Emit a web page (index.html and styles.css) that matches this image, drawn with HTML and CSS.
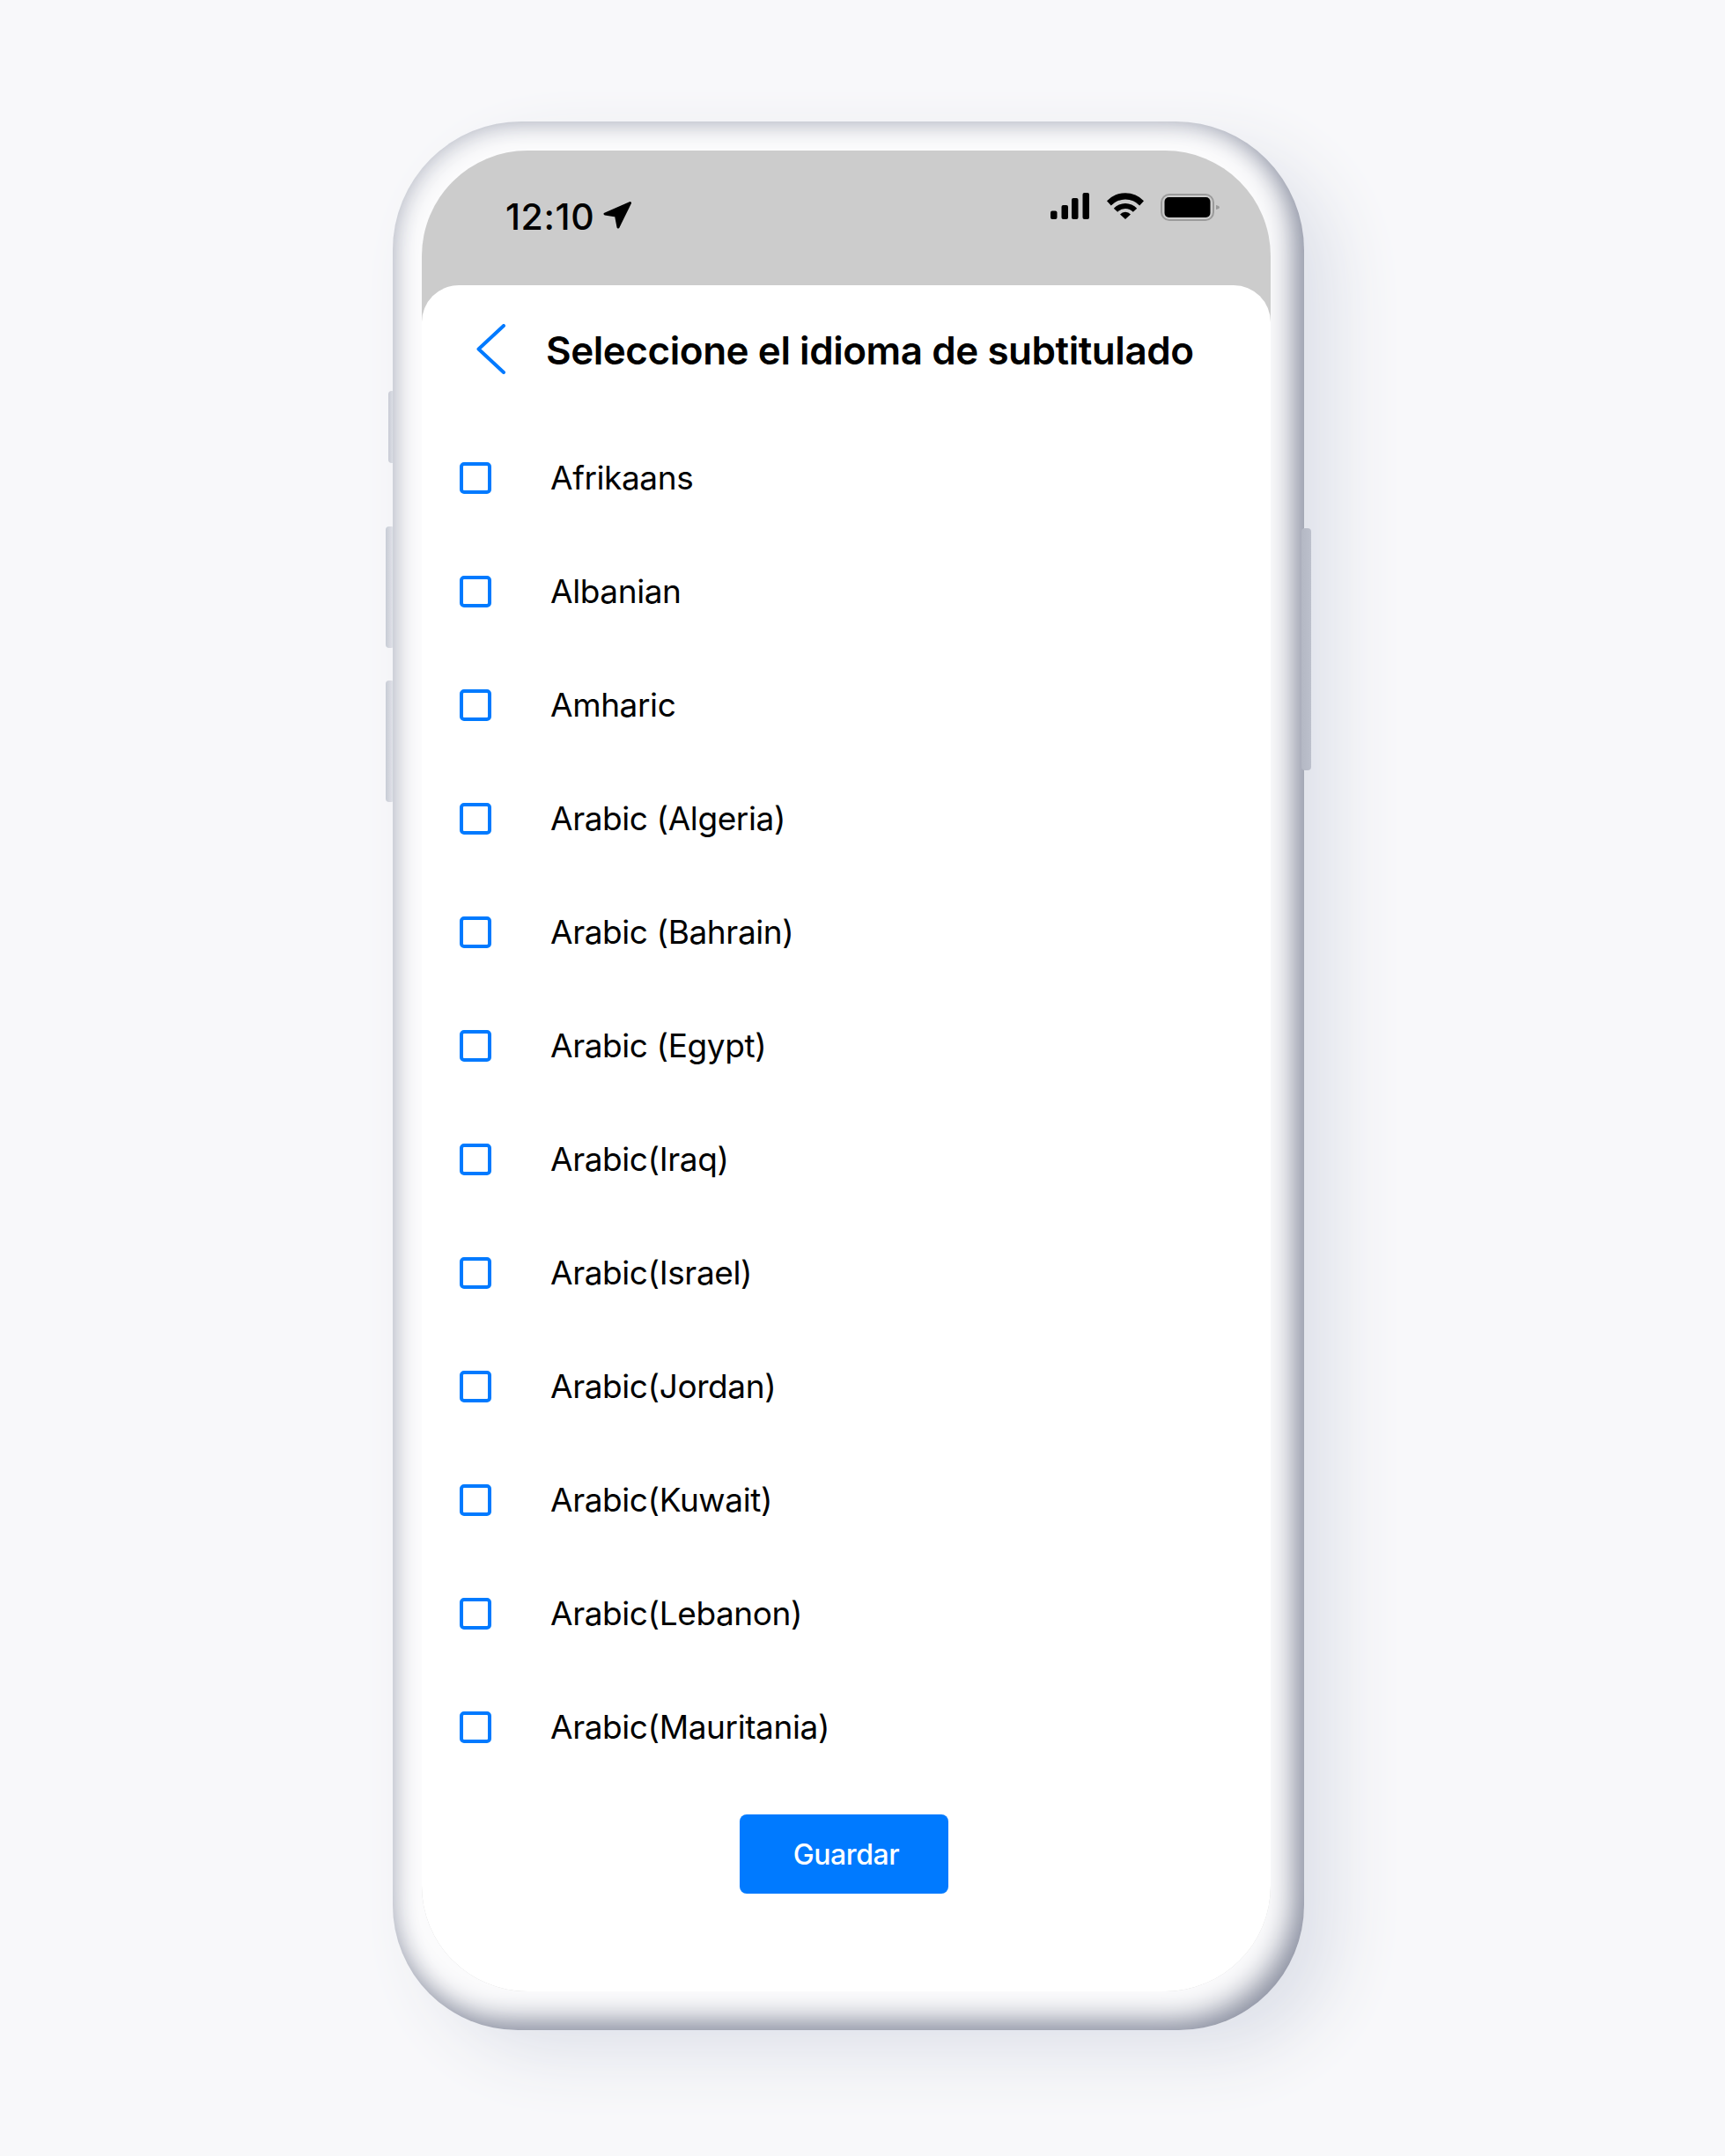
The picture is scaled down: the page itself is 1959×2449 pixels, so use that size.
FILE: index.html
```html
<!DOCTYPE html>
<html lang="es">
<head>
  <meta charset="UTF-8">
  <title>Seleccione el idioma de subtitulado</title>
  <link rel="stylesheet" href="styles.css">
</head>
<body>
  <div class="phone">
    <!-- Side buttons -->
    <span class="side-btn side-mute"></span>
    <span class="side-btn side-vol-up"></span>
    <span class="side-btn side-vol-down"></span>
    <span class="side-btn side-power"></span>

    <div class="screen">
      <div class="status-bar">
        <div class="status-time">
          <span>12:10</span>
          <svg class="location-icon" width="33" height="32" viewBox="0 0 33 32">
            <path d="M30.5 2.5 L2 15 L14.5 17 L17 30 Z" fill="#000" stroke="#000" stroke-width="3" stroke-linejoin="round"/>
          </svg>
        </div>
        <div class="status-icons">
          <svg width="44" height="30" viewBox="0 0 44 30">
            <rect x="0" y="20.5" width="7.5" height="9.5" rx="2" fill="#000"/>
            <rect x="12.5" y="14" width="7.5" height="16" rx="2" fill="#000"/>
            <rect x="24" y="6" width="7.5" height="24" rx="2" fill="#000"/>
            <rect x="36.5" y="0" width="7.5" height="30" rx="2" fill="#000"/>
          </svg>
          <svg class="wifi-icon" width="42" height="30" viewBox="0 0 42 30">
            <path d="M0 9.2 A29 29 0 0 1 42 9.2 L37.2 14.6 A22 22 0 0 0 4.8 14.6 Z" fill="#000"/>
            <path d="M7.8 17.7 A18 18 0 0 1 34.2 17.7 L29.8 21.8 A12 12 0 0 0 12.2 21.8 Z" fill="#000"/>
            <path d="M15 24.5 A8 8 0 0 1 27 24.5 L21 30 Z" fill="#000"/>
          </svg>
          <svg class="battery-icon" width="67" height="31" viewBox="0 0 67 31">
            <rect x="1" y="1" width="59" height="29" rx="9" fill="none" stroke="#9b9b9b" stroke-width="2"/>
            <rect x="4.5" y="4" width="52" height="23" rx="5" fill="#000"/>
            <path d="M63 13 C65.5 13.5 67 14.5 67 15.5 C67 16.5 65.5 17.5 63 18 Z" fill="#9b9b9b"/>
          </svg>
        </div>
      </div>

      <div class="sheet">
        <div class="sheet-header">
          <svg class="back-icon" width="33" height="57" viewBox="0 0 33 57">
            <path d="M31 2 L2.5 28.5 L31 55" fill="none" stroke="#007aff" stroke-width="4" stroke-linecap="round" stroke-linejoin="round"/>
          </svg>
          <h1 class="sheet-title">Seleccione el idioma de subtitulado</h1>
        </div>

        <ul class="lang-list">
          <li class="lang-row"><span class="checkbox"></span>Afrikaans</li>
          <li class="lang-row"><span class="checkbox"></span>Albanian</li>
          <li class="lang-row"><span class="checkbox"></span>Amharic</li>
          <li class="lang-row"><span class="checkbox"></span>Arabic (Algeria)</li>
          <li class="lang-row"><span class="checkbox"></span>Arabic (Bahrain)</li>
          <li class="lang-row"><span class="checkbox"></span>Arabic (Egypt)</li>
          <li class="lang-row"><span class="checkbox"></span>Arabic(Iraq)</li>
          <li class="lang-row"><span class="checkbox"></span>Arabic(Israel)</li>
          <li class="lang-row"><span class="checkbox"></span>Arabic(Jordan)</li>
          <li class="lang-row"><span class="checkbox"></span>Arabic(Kuwait)</li>
          <li class="lang-row"><span class="checkbox"></span>Arabic(Lebanon)</li>
          <li class="lang-row"><span class="checkbox"></span>Arabic(Mauritania)</li>
        </ul>

        <button class="save-button">Guardar</button>
      </div>
    </div>
  </div>
</body>
</html>
```

FILE: styles.css
```css
html, body {
  margin: 0;
  padding: 0;
}

body {
  width: 1959px;
  height: 2449px;
  box-sizing: border-box;
  padding: 138px 0 0 446px;
  background-color: #f8f8fa;
  font-family: Inter, "Liberation Sans", sans-serif;
  color: #000;
  overflow: hidden;
}

/* Phone body: soft bevel made of two inset shadows */
.phone {
  position: relative;
  display: flex;
  width: 1035px;
  height: 2168px;
  box-sizing: border-box;
  padding: 33px 38px 44px 33px;
  border-radius: 146px 146px 142px 142px;
  background-color: #fbfbfc;
  box-shadow:
    inset -11px -11px 32px 0 #8a8fa0,
    inset 5px 6px 26px 0 #d6d8df,
    40px 30px 80px -6px #dde0e9;
}

.side-btn {
  position: absolute;
  border-radius: 4px;
  background: linear-gradient(to right, #c6cad4, #e6e7ec);
  z-index: -1;
}

.side-mute {
  left: -5px;
  top: 306px;
  width: 8px;
  height: 82px;
}

.side-vol-up {
  left: -8px;
  top: 460px;
  width: 10px;
  height: 138px;
}

.side-vol-down {
  left: -8px;
  top: 635px;
  width: 10px;
  height: 138px;
}

.side-power {
  right: -8px;
  top: 462px;
  width: 11px;
  height: 275px;
  background: linear-gradient(to right, #b4b8c4, #bcc0cc);
  z-index: 1;
}

.screen {
  flex: 1;
  display: flex;
  flex-direction: column;
  overflow: hidden;
  border-radius: 120px;
  background-color: #cccccc;
}

.status-bar {
  display: flex;
  justify-content: space-between;
  height: 153px;
  box-sizing: border-box;
  padding: 48px 58px 0 95px;
}

.status-time {
  display: flex;
  align-items: flex-start;
  gap: 10px;
  margin-top: 4px;
  font-size: 41px;
  font-weight: 500;
  line-height: 47px;
  letter-spacing: 0.6px;
}

.location-icon {
  margin-top: 5px;
}

.status-icons {
  display: flex;
  align-items: flex-start;
  gap: 19px;
}

.wifi-icon {
  margin-left: 1px;
}

.battery-icon {
  margin-top: 1px;
}

.sheet {
  flex: 1;
  display: flex;
  flex-direction: column;
  border-radius: 42px 42px 0 0;
  background-color: #fff;
}

.sheet-header {
  display: flex;
  align-items: center;
  gap: 46px;
  height: 144px;
  padding-left: 62px;
}

.sheet-title {
  margin: 3px 0 0;
  font-size: 44px;
  font-weight: 600;
  line-height: 54px;
  letter-spacing: -0.45px;
  white-space: nowrap;
}

.lang-list {
  list-style: none;
  margin: 10px 0 0;
  padding: 0 0 0 43px;
}

.lang-row {
  display: flex;
  align-items: center;
  gap: 67px;
  height: 129px;
  font-size: 37px;
  font-weight: 400;
  letter-spacing: -0.4px;
}

.checkbox {
  width: 36px;
  height: 36px;
  box-sizing: border-box;
  border: 4px solid #007aff;
  border-radius: 5px;
}

.save-button {
  align-self: flex-start;
  width: 237px;
  height: 90px;
  margin: 35px 0 0 361px;
  padding: 0 0 0 5px;
  border: none;
  border-radius: 8px;
  background-color: #007aff;
  color: #fff;
  font-family: inherit;
  font-size: 32px;
  font-weight: 500;
  letter-spacing: -0.4px;
}
```
